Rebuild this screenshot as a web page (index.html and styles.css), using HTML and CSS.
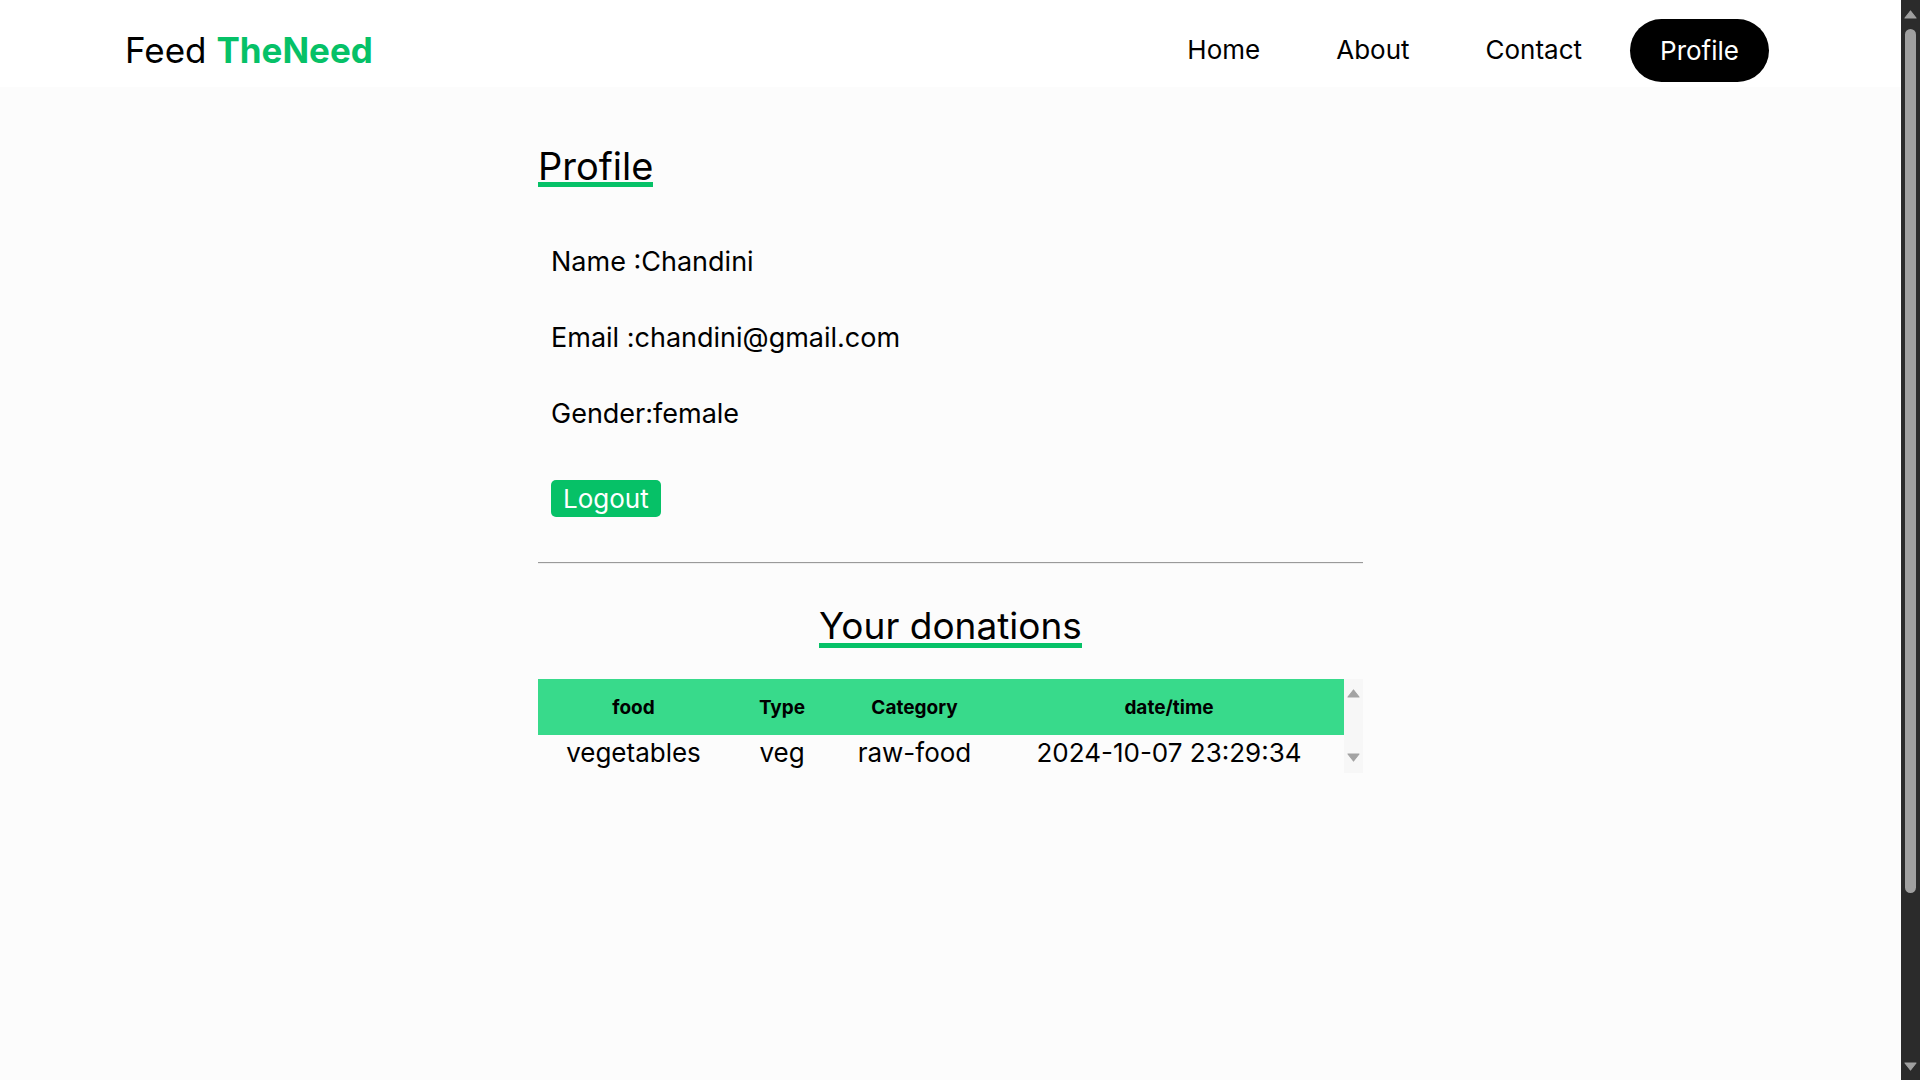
FILE: index.html
```html
<!DOCTYPE html>
<html lang="en">
<head>
<meta charset="utf-8">
<title>Profile - Feed TheNeed</title>
<link rel="stylesheet" href="styles.css">
</head>
<body>
<div class="page">
  <header class="topbar">
    <div class="logo">Feed <b>TheNeed</b></div>
    <nav class="nav">
      <a href="#" class="nav-link">Home</a>
      <a href="#" class="nav-link">About</a>
      <a href="#" class="nav-link">Contact</a>
      <a href="#" class="nav-btn">Profile</a>
    </nav>
  </header>
  <main class="profile">
    <h1 class="title">Profile</h1>
    <div class="info">
      <p class="info-row">Name :Chandini</p>
      <p class="info-row">Email :chandini@gmail.com</p>
      <p class="info-row">Gender:female</p>
    </div>
    <a href="#" class="logout">Logout</a>
    <hr class="divider">
    <h2 class="subtitle">Your donations</h2>
    <div class="tbl-wrap">
      <table class="tbl">
        <thead>
          <tr><th class="c1">food</th><th class="c2">Type</th><th class="c3">Category</th><th class="c4">date/time</th></tr>
        </thead>
        <tbody>
          <tr><td>vegetables</td><td>veg</td><td>raw-food</td><td>2024-10-07 23:29:34</td></tr>
        </tbody>
      </table>
      <div class="tscroll">
        <svg class="arrow" viewBox="0 0 13 9" width="13" height="9"><polygon points="6.5,1 12,8 1,8" class="arrow-shape light"/></svg>
        <svg class="arrow" viewBox="0 0 13 9" width="13" height="9"><polygon points="1,1 12,1 6.5,8" class="arrow-shape light"/></svg>
      </div>
    </div>
  </main>
</div>
<aside class="vscroll">
  <svg class="arrow" viewBox="0 0 13 9" width="13" height="9"><polygon points="6.5,1 12,8 1,8" class="arrow-shape"/></svg>
  <div class="thumb"></div>
  <svg class="arrow arrow-down" viewBox="0 0 13 9" width="13" height="9"><polygon points="1,1 12,1 6.5,8" class="arrow-shape"/></svg>
</aside>
</body>
</html>
```
FILE: styles.css
```css
html, body { margin: 0; padding: 0; }
body {
  display: flex;
  height: 100vh;
  overflow: hidden;
  background: #fcfcfc;
  color: #000;
  font-family: "Inter", "Noto Sans", sans-serif;
}
a { color: inherit; text-decoration: none; }

.page { flex: 1; min-width: 0; background: #fcfcfc; }

/* header */
.topbar {
  box-sizing: border-box;
  height: 87px;
  padding: 13px 132px 0 125px;
  background: #fff;
  display: flex;
  align-items: center;
  justify-content: space-between;
}
.logo {
  font-size: 35px;
  line-height: 1;
  font-weight: 400;
  white-space: nowrap;
}
.logo b { color: #06c167; font-weight: 700; }
.nav { display: flex; align-items: center; }
.nav-link {
  font-size: 26px;
  line-height: 1;
  margin-left: 76px;
}
.nav-link:first-child { margin-left: 0; }
.nav-btn {
  margin-left: 48px;
  font-size: 26px;
  height: 63px;
  line-height: 63px;
  padding: 0 30px;
  border-radius: 32px;
  background: #000;
  color: #fff;
}

/* profile */
.profile {
  width: 825px;
  margin: 0 auto;
  padding-top: 63px;
}
.title {
  margin: 0;
  width: max-content;
  font-size: 38px;
  font-weight: 400;
  line-height: 32px;
  border-bottom: 5px solid #06c167;
}
.info { margin-top: 37px; padding-left: 13px; }
.info-row {
  margin: 0;
  font-size: 27px;
  line-height: 76px;
}
.logout {
  display: block;
  width: max-content;
  margin: 28px 0 0 13px;
  height: 37px;
  line-height: 37px;
  padding: 0 12px;
  font-size: 26px;
  color: #fff;
  background: #06c167;
  border-radius: 5px;
}
.divider {
  margin: 45px 0 0;
  border: 0;
  border-top: 1px solid #9a9a9a;
  border-bottom: 1px solid #eeeeee;
}
.subtitle {
  margin: 44px auto 0;
  width: max-content;
  font-size: 37px;
  font-weight: 400;
  line-height: 35px;
  border-bottom: 5px solid #06c167;
}

/* table */
.tbl-wrap {
  margin-top: 31px;
  height: 94px;
  display: flex;
  align-items: flex-start;
}
.tbl {
  width: 806px;
  flex: 0 0 806px;
  border-collapse: collapse;
  table-layout: fixed;
}
.tbl th {
  height: 56px;
  padding: 0;
  background: #38da8b;
  font-size: 19px;
  font-weight: 700;
  text-align: center;
}
.tbl td {
  height: 35px;
  padding: 0;
  font-size: 26px;
  line-height: 35px;
  text-align: center;
  white-space: nowrap;
}
.c1 { width: 191px; }
.c2 { width: 106px; }
.c3 { width: 159px; }
.c4 { width: 350px; }

.tscroll {
  box-sizing: border-box;
  flex: 0 0 19px;
  height: 94px;
  padding: 10px 0 11px 3px;
  background: #f7f7f7;
  display: flex;
  flex-direction: column;
  justify-content: space-between;
}

/* page scrollbar */
.vscroll {
  box-sizing: border-box;
  flex: 0 0 19px;
  height: 100vh;
  padding: 10px 0 9px;
  background: #2b2b2b;
  display: flex;
  flex-direction: column;
}
.arrow { display: block; margin-left: 3px; }
.tscroll .arrow { margin-left: 0; }
.arrow-shape {
  fill: #a0a0a0;
  stroke: #a0a0a0;
  stroke-width: 1.2;
  stroke-linejoin: round;
}
.arrow-shape.light { fill: #a3a3a3; stroke: #a3a3a3; }
.thumb {
  margin: 10px 0 0 4px;
  width: 11px;
  height: 864px;
  border-radius: 6px;
  background: #a0a0a0;
}
.arrow-down { margin-top: auto; }
```
